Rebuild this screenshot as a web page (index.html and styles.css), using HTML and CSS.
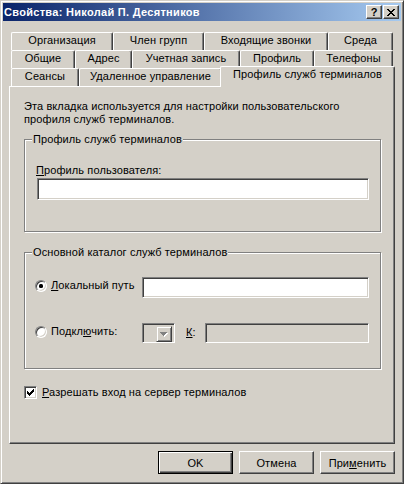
FILE: index.html
```html
<!DOCTYPE html>
<html lang="ru">

<head>
    <meta charset="UTF-8">
    <title>Свойства: Николай П. Десятников</title>
    <link rel="stylesheet" href="styles.css">
</head>

<body>
    <div class="window">
        <div class="titlebar">
            <span class="title">Свойства: Николай П. Десятников</span>
            <div class="caption-buttons">
                <button class="cap-btn help">?</button>
                <button class="cap-btn close">
                    <svg width="8" height="7" viewBox="0 0 8 7"><path d="M0 0h2v1H0zM6 0h2v1H6zM1 1h2v1H1zM5 1h2v1H5zM2 2h4v1H2zM3 3h2v1H3zM2 4h4v1H2zM1 5h2v1H1zM5 5h2v1H5zM0 6h2v1H0zM6 6h2v1H6z" fill="#000"/></svg>
                </button>
            </div>
        </div>

        <div class="content">
            <!-- three rows of tabs, the front row touches the page -->
            <div class="tabs">
                <div class="tab-row">
                    <div class="tab w-org">Организация</div>
                    <div class="tab w-groups">Член групп</div>
                    <div class="tab w-dialin">Входящие звонки</div>
                    <div class="tab w-env">Среда</div>
                </div>
                <div class="tab-row">
                    <div class="tab w-general">Общие</div>
                    <div class="tab w-address">Адрес</div>
                    <div class="tab w-account">Учетная запись</div>
                    <div class="tab w-profile">Профиль</div>
                    <div class="tab w-phones">Телефоны</div>
                </div>
                <div class="tab-row">
                    <div class="tab w-sessions">Сеансы</div>
                    <div class="tab w-remote">Удаленное управление</div>
                    <div class="tab tab-active">Профиль служб терминалов</div>
                </div>
            </div>

            <div class="panel">
                <p class="intro">Эта вкладка используется для настройки пользовательского<br>профиля служб терминалов.</p>

                <fieldset class="group group-profile">
                    <legend>Профиль служб терминалов</legend>
                    <div class="group-body">
                        <label class="field-label"><u>П</u>рофиль пользователя:</label>
                        <div class="textbox"></div>
                    </div>
                </fieldset>

                <fieldset class="group group-home">
                    <legend>Основной каталог служб терминалов</legend>
                    <div class="group-body">
                        <div class="option-row">
                            <div class="radio-option">
                                <span class="radio"><span class="radio-dot"></span></span>
                                <span><u>Л</u>окальный путь</span>
                            </div>
                            <div class="textbox path-box"></div>
                        </div>
                        <div class="option-row connect-row">
                            <div class="radio-option">
                                <span class="radio"></span>
                                <span>Подкл<u>ю</u>чить:</span>
                            </div>
                            <div class="combo disabled">
                                <span class="combo-arrow">
                                    <svg width="8" height="5" viewBox="0 0 8 5">
                                        <path d="M1 1h7v1H1zM2 2h5v1H2zM3 3h3v1H3zM4 4h1v1H4z" fill="#fff"/>
                                        <path d="M0 0h7v1H0zM1 1h5v1H1zM2 2h3v1H2zM3 3h1v1H3z" fill="#808080"/>
                                    </svg>
                                </span>
                            </div>
                            <span class="to-label"><u>К</u>:</span>
                            <div class="textbox disabled to-box"></div>
                        </div>
                    </div>
                </fieldset>

                <div class="check-row">
                    <span class="checkbox">
                        <svg width="7" height="7" viewBox="0 0 7 7"><path d="M6 0h1v1H6zM5 1h2v1H5zM0 2h1v1H0zM4 2h3v1H4zM0 3h2v1H0zM3 3h3v1H3zM0 4h5v1H0zM1 5h3v1H1zM2 6h1v1H2z" fill="#000"/></svg>
                    </span>
                    <span><u>Р</u>азрешать вход на сервер терминалов</span>
                </div>
            </div>

            <div class="actions">
                <button class="btn btn-default">OK</button>
                <button class="btn">Отмена</button>
                <button class="btn">При<u>м</u>енить</button>
            </div>
        </div>
    </div>
</body>

</html>
```

FILE: styles.css
```css
body {
    margin: 0;
    font-family: 'Liberation Sans', Arial, sans-serif;
    font-size: 11px;
    letter-spacing: 0.1px;
    color: #000;
    background: #d4d0c8;
}

u {
    text-decoration: underline;
    text-underline-offset: 1px;
}

.window {
    width: 404px;
    height: 484px;
    box-sizing: border-box;
    background: #d4d0c8;
    border: 1px solid;
    border-color: #d4d0c8 #404040 #404040 #d4d0c8;
    box-shadow: inset 1px 1px #fff, inset -1px -1px #808080;
    padding: 2px;
    display: flex;
    flex-direction: column;
}

/* Title bar */
.titlebar {
    height: 18px;
    flex-shrink: 0;
    display: flex;
    align-items: center;
    padding-left: 1px;
    background: linear-gradient(to right, #0a246a, #a6caf0);
    color: #fff;
    font-weight: bold;
}

.title {
    flex: 1;
    white-space: nowrap;
    letter-spacing: 0.3px;
}

.caption-buttons {
    display: flex;
    gap: 1px;
    margin-right: 2px;
}

.cap-btn {
    width: 16px;
    height: 14px;
    box-sizing: border-box;
    padding: 0;
    border: 1px solid;
    border-color: #fff #404040 #404040 #fff;
    box-shadow: inset -1px -1px #808080;
    background: #d4d0c8;
    display: flex;
    align-items: center;
    justify-content: center;
    font-family: 'Liberation Sans', Arial, sans-serif;
    font-weight: bold;
    font-size: 11px;
    line-height: 11px;
    color: #000;
}

.cap-btn svg {
    display: block;
}

/* Tabs */
.content {
    padding: 11px 6px 0 6px;
}

.tabs {
    margin-left: 2px;
    width: 382px;
}

.tab-row {
    display: flex;
    height: 18px;
}

.tab {
    box-sizing: border-box;
    height: 18px;
    border-top: 1px solid #fff;
    border-left: 1px solid #fff;
    border-right: 1px solid #404040;
    border-radius: 2px 2px 0 0;
    box-shadow: inset -1px 0 #808080;
    background: #d4d0c8;
    text-align: center;
    line-height: 15px;
    white-space: nowrap;
}

.w-org { width: 102px; }
.w-groups { width: 91px; }
.w-dialin { width: 124px; }
.w-env { width: 65px; }

.w-general { width: 64px; }
.w-address { width: 57px; }
.w-account { width: 108px; }
.w-profile { width: 74px; }
.w-phones { width: 79px; }

.w-sessions { width: 68px; }
.w-remote { width: 143px; }

.tab-active {
    position: relative;
    z-index: 1;
    width: 175px;
    height: 21px;
    margin: -2px -2px -1px -2px;
    line-height: 15px;
}

/* Page */
.panel {
    box-sizing: border-box;
    width: 386px;
    height: 358px;
    border: 1px solid;
    border-color: #fff #404040 #404040 #fff;
    box-shadow: inset -1px -1px #808080;
    padding: 13px 13px 0 14px;
}

.intro {
    margin: 0;
    line-height: 13px;
}

.group {
    margin: 7px 0 0 0;
    padding: 0;
    border: 1px solid #808080;
    box-shadow: inset 1px 1px #fff, 1px 1px #fff;
    min-width: 0;
}

.group legend {
    margin-left: 7px;
    padding: 0 1px;
    line-height: 13px;
    background: #d4d0c8;
}

.group-profile .group-body {
    padding: 18px 11px 31px 12px;
}

.field-label {
    display: block;
    line-height: 13px;
    margin-left: -1px;
}

.textbox {
    box-sizing: border-box;
    height: 22px;
    margin-top: 1px;
    border: 1px solid;
    border-color: #808080 #fff #fff #808080;
    box-shadow: inset 1px 1px #404040, inset -1px -1px #d4d0c8;
    background: #fff;
}

.textbox.disabled {
    background: #d4d0c8;
}

.group-home {
    margin-top: 14px;
}

.group-home .group-body {
    padding: 18px 11px 25px 10px;
}

.option-row {
    display: flex;
    align-items: flex-start;
}

.connect-row {
    margin-top: 25px;
}

.radio-option {
    width: 107px;
    flex-shrink: 0;
    display: flex;
    align-items: center;
    gap: 4px;
    margin-top: 2px;
    line-height: 13px;
}

.radio {
    box-sizing: border-box;
    width: 12px;
    height: 12px;
    border-radius: 50%;
    border: 1px solid;
    border-color: #808080 #fff #fff #808080;
    box-shadow: inset 1px 1px #404040, inset -1px -1px #d4d0c8;
    background: #fff;
    display: flex;
    align-items: center;
    justify-content: center;
}

.radio-dot {
    width: 4px;
    height: 4px;
    border-radius: 1.5px;
    background: #000;
}

.path-box {
    flex: 1;
    height: 21px;
    margin-top: 0;
}

.combo {
    box-sizing: border-box;
    width: 33px;
    height: 20px;
    border: 1px solid;
    border-color: #808080 #fff #fff #808080;
    box-shadow: inset 1px 1px #404040, inset -1px -1px #d4d0c8;
    background: #d4d0c8;
    display: flex;
    justify-content: flex-end;
    padding: 2px;
}

.combo-arrow {
    box-sizing: border-box;
    width: 16px;
    height: 16px;
    border: 1px solid;
    border-color: #d4d0c8 #404040 #404040 #d4d0c8;
    box-shadow: inset 1px 1px #fff, inset -1px -1px #808080;
    display: flex;
    align-items: center;
    justify-content: center;
}

.to-label {
    margin: 3px 0 0 11px;
    width: 19px;
    line-height: 13px;
}

.to-box {
    flex: 1;
    height: 20px;
    margin-top: 0;
}

.check-row {
    display: flex;
    align-items: center;
    gap: 5px;
    margin-top: 17px;
    line-height: 13px;
}

.checkbox {
    box-sizing: border-box;
    width: 13px;
    height: 13px;
    border: 1px solid;
    border-color: #808080 #fff #fff #808080;
    box-shadow: inset 1px 1px #404040, inset -1px -1px #d4d0c8;
    background: #fff;
    display: flex;
    align-items: center;
    justify-content: center;
}

.checkbox svg {
    display: block;
}

/* Dialog buttons */
.actions {
    display: flex;
    justify-content: flex-end;
    gap: 6px;
    margin-top: 7px;
    width: 386px;
}

.btn {
    box-sizing: border-box;
    width: 75px;
    height: 23px;
    padding: 0;
    border: 1px solid;
    border-color: #fff #404040 #404040 #fff;
    box-shadow: inset -1px -1px #808080;
    background: #d4d0c8;
    font-family: 'Liberation Sans', Arial, sans-serif;
    font-size: 11px;
    letter-spacing: 0.1px;
    color: #000;
}

.btn-default {
    border-color: #000;
    box-shadow: inset 1px 1px #fff, inset -1px -1px #404040, inset -2px -2px #808080;
}
```
